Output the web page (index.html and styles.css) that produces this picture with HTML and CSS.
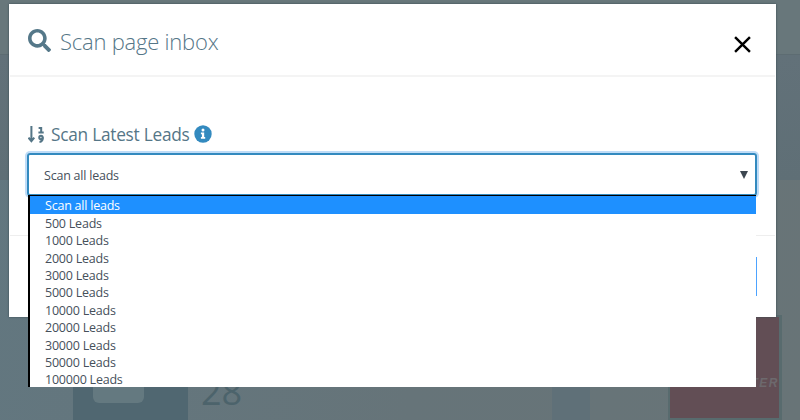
FILE: index.html
```html
<!DOCTYPE html>
<html lang="en">
<head>
<meta charset="utf-8">
<title>Scan page inbox</title>
<link rel="stylesheet" href="styles.css">
</head>
<body>
<div class="page">
  <div class="topbar"></div>
  <div class="band"></div>
  <div class="cards">
    <div class="stat">
      <div class="stat-icon"><span class="stat-shape"></span></div>
      <div class="stat-value">28</div>
    </div>
    <div class="stripe"></div>
    <div class="promo"><span class="promo-logo">AUTOPOSTER</span></div>
  </div>
</div>
<section class="modal">
  <header class="modal-header">
    <svg class="icon-search" viewBox="0 0 512 512"><path fill="currentColor" d="M505 442.700L405.300 343c-4.500-4.500-10.600-7-17-7H372c27.600-35.300 44-79.700 44-128C416 93.100 322.900 0 208 0S0 93.100 0 208s93.100 208 208 208c48.300 0 92.700-16.400 128-44v16.300c0 6.400 2.500 12.500 7 17l99.700 99.700c9.400 9.400 24.600 9.400 33.900 0l28.300-28.300c9.400-9.400 9.400-24.600.1-34zM208 336c-70.700 0-128-57.200-128-128 0-70.700 57.200-128 128-128 70.700 0 128 57.200 128 128 0 70.700-57.200 128-128 128z"/></svg>
    <h1 class="modal-title">Scan page inbox</h1>
    <svg class="icon-close" viewBox="0 0 16 16"><path d="M1 1 15 15M15 1 1 15" stroke="currentColor" stroke-width="2.300"/></svg>
  </header>
  <div class="modal-body">
    <div class="field-label">
      <svg class="icon-sort" viewBox="0 0 16 16"><path d="M3.200 0V14M.5 11 3.200 14.300 5.900 11" fill="none" stroke="currentColor" stroke-width="1.900"/><path d="M10 1.800H12.400V6M9.800 6.200H14.800" fill="none" stroke="currentColor" stroke-width="1.900"/><circle cx="12.200" cy="10.800" r="1.600" fill="none" stroke="currentColor" stroke-width="1.900"/><path d="M13.900 10.600C14 13.500 13.200 14.800 10.800 15" fill="none" stroke="currentColor" stroke-width="1.900"/></svg>
      <span class="label-text">Scan Latest Leads</span>
      <svg class="icon-info" viewBox="0 0 18 18"><circle cx="9" cy="9" r="8.700" fill="#338abf"/><circle cx="9" cy="5" r="1.500" fill="#fff"/><path d="M6.900 7.500H10.200V12H11.200V13.700H6.900V12H7.900V9.200H6.900Z" fill="#fff"/></svg>
    </div>
    <div class="select">
      <span class="select-value">Scan all leads</span>
      <svg class="caret" viewBox="0 0 8 8"><path d="M0 0H8L4 8Z" fill="currentColor"/></svg>
      <ul class="options">
        <li class="option selected">Scan all leads</li>
        <li class="option">500 Leads</li>
        <li class="option">1000 Leads</li>
        <li class="option">2000 Leads</li>
        <li class="option">3000 Leads</li>
        <li class="option">5000 Leads</li>
        <li class="option">10000 Leads</li>
        <li class="option">20000 Leads</li>
        <li class="option">30000 Leads</li>
        <li class="option">50000 Leads</li>
        <li class="option">100000 Leads</li>
      </ul>
    </div>
  </div>
  <footer class="modal-footer"><span class="button"></span></footer>
</section>
</body>
</html>
```
FILE: styles.css
```css
* { box-sizing: border-box; }
body {
  margin: 0;
  width: 800px;
  height: 420px;
  overflow: hidden;
  position: relative;
  font-family: "Open Sans", "Noto Sans", sans-serif;
  background: #66757b;
}
.page {
  height: 420px;
  display: flex;
  flex-direction: column;
  background: linear-gradient(100deg, #627780, #667479 55%, #687477);
}
.topbar { height: 55px; border-bottom: 1px solid #5d6c72; background: #68777b; }
.band { height: 125px; background: linear-gradient(#627179, #5f6f76); }
.cards { height: 240px; padding: 135px 18px 0 73px; display: flex; align-items: stretch; }
.stat { display: flex; width: 479px; }
.stat-icon { width: 115px; background: #506771; padding: 58px 0 0 20px; }
.stat-shape { display: block; width: 51px; height: 30px; border-radius: 6px; background: #647980; }
.stat-value {
  padding: 53px 0 0 13px;
  font-size: 36px;
  line-height: 48px;
  color: #4c636b;
}
.stripe { width: 38px; margin-right: 78px; background: #5f7078; }
.promo {
  width: 114px;
  border: 2px solid #586b6e;
  border-right-width: 3px;
  background: #624e55;
  display: flex;
  justify-content: flex-end;
  overflow: hidden;
}
.promo-logo {
  margin-top: 57px;
  font: italic bold 12px/18px "Liberation Sans", sans-serif;
  letter-spacing: 1.500px;
  color: #6d696d;
}
.modal {
  position: absolute;
  left: 9px;
  top: 4px;
  width: 767px;
  height: 313px;
  background: #fff;
  box-shadow: 0 0 2px #35484f;
  color: #557687;
}
.modal-header {
  height: 73px;
  margin: 0 1px;
  padding: 0 24px 0 18px;
  display: flex;
  align-items: center;
  border-bottom: 2px solid #f4f4f4;
}
.icon-search { width: 23px; height: 23px; margin-top: 2px; color: #557889; }
.modal-title {
  flex: 1;
  margin: 2px 0 0 9px;
  font-size: 22px;
  font-weight: 300;
  letter-spacing: -0.22px;
  line-height: 30px;
}
.icon-close { width: 17px; height: 17px; margin-top: 10px; color: #000; }
.modal-body { height: 158px; padding: 43px 19px 0; }
.field-label { height: 28px; display: flex; align-items: center; }
.icon-sort { width: 17px; height: 17px; }
.label-text { margin-left: 6px; width: 143px; font-size: 17.300px; letter-spacing: -0.26px; white-space: nowrap; }
.icon-info { width: 18px; height: 18px; }
.select {
  position: relative;
  height: 43px;
  margin-top: 5px;
  margin-left: -1px;
  padding: 2px 7px 0 15px;
  display: flex;
  align-items: center;
  justify-content: space-between;
  border: 2px solid #338abf;
  border-radius: 3px;
  box-shadow: 0 0 0 2px #bfdcf7;
  font-size: 12.500px;
  letter-spacing: -0.22px;
  color: #46505b;
}
.select-value { margin-top: -1px; }
.caret { width: 8px; height: 8px; margin-top: -2px; color: #3c4650; }
.options {
  position: absolute;
  left: -1px;
  top: 40px;
  width: 728px;
  height: 192px;
  margin: 0;
  padding: 0;
  list-style: none;
  background: #fff;
  border-top: 1px solid #000;
  border-left: 2px solid #000;
}
.option { height: 17.360px; padding-left: 15px; line-height: 20px; white-space: nowrap; }
.option.selected { height: 18px; background: #1e90ff; color: #fff; }
.modal-footer {
  height: 82px;
  margin: 0 1px;
  padding: 21px 18px 0;
  border-top: 1px solid #eee;
  display: flex;
  justify-content: flex-end;
}
.button { width: 100px; height: 39px; background: #4da3ff; }
```
